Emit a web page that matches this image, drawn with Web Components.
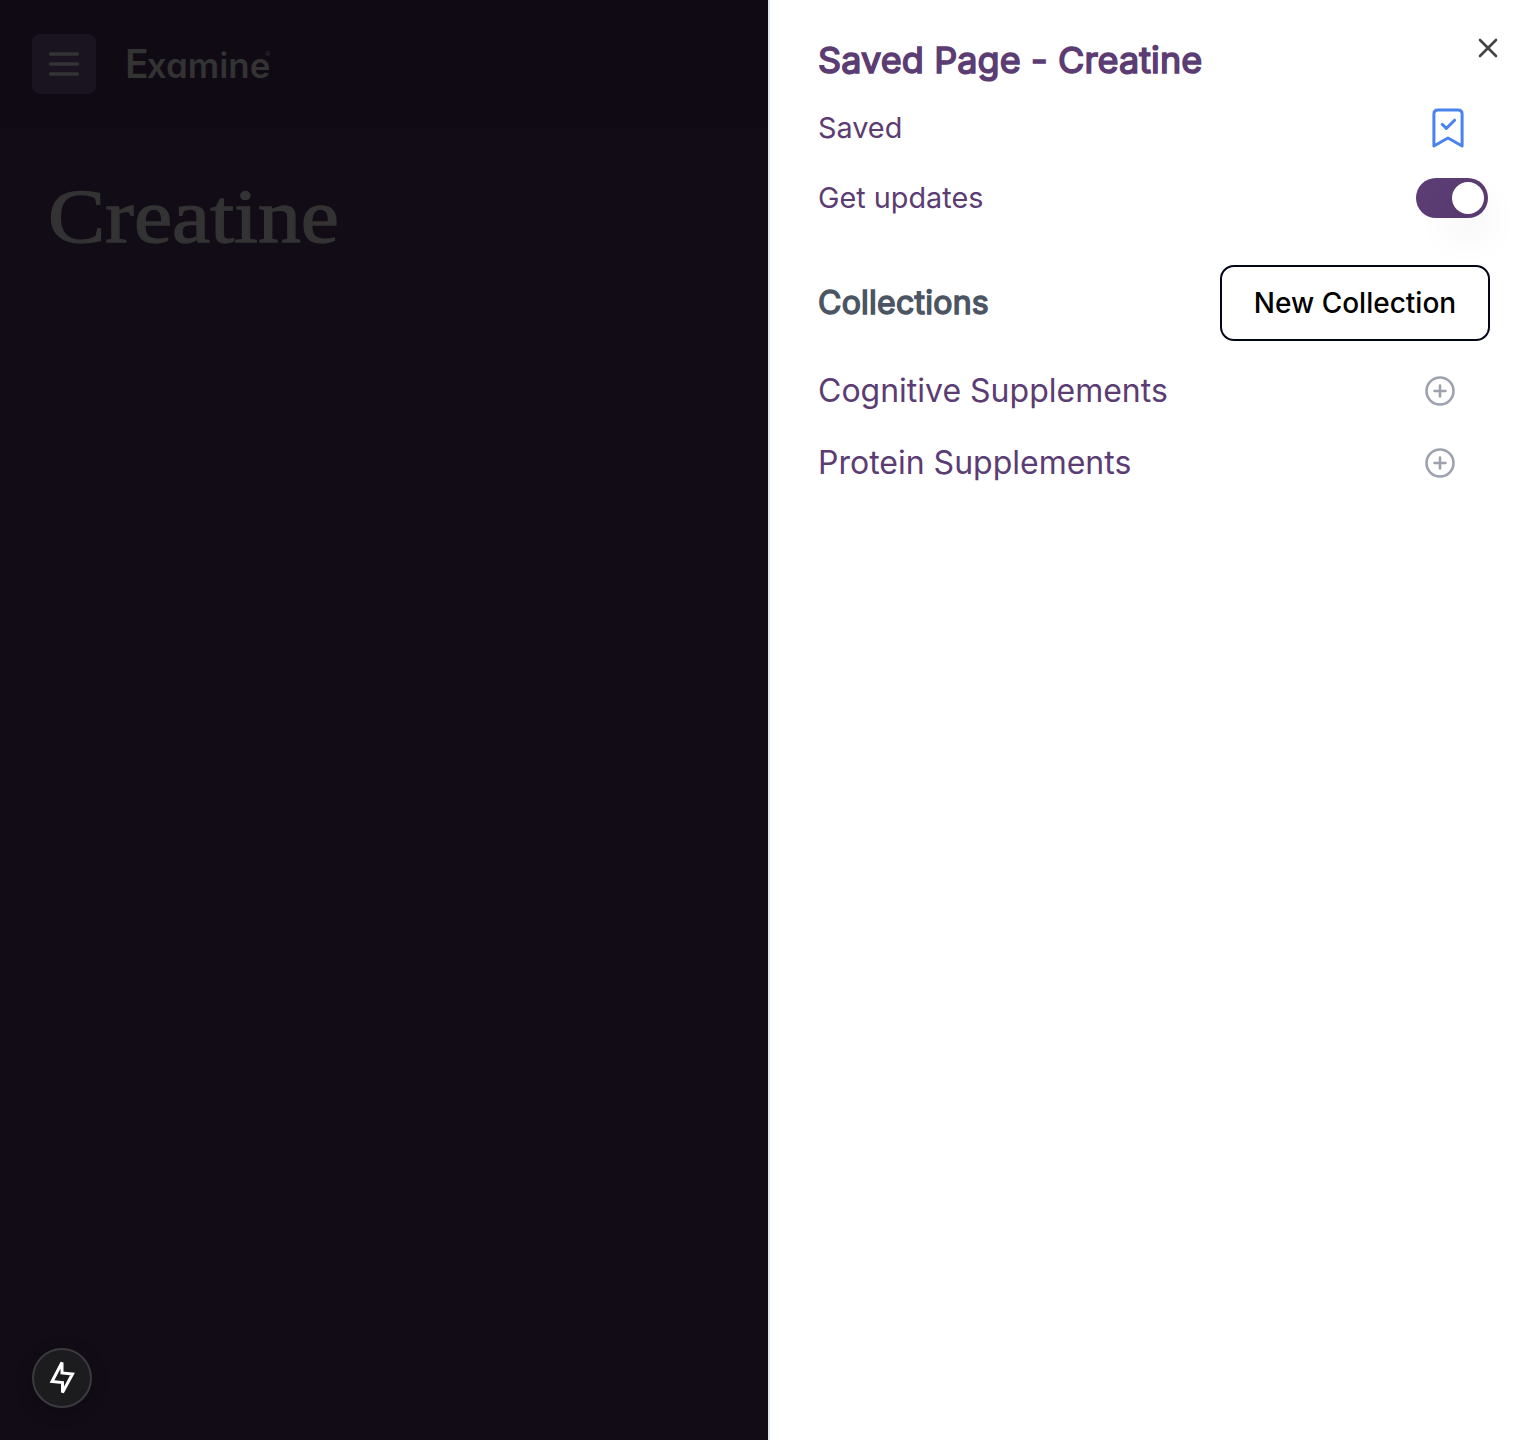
<!DOCTYPE html>
<html lang="en">
<head>
<meta charset="utf-8">
<title>Saved Page - Creatine</title>
<style>
html,body{margin:0;height:100%;overflow:hidden;background:#fff}
body{font-family:Inter,"Liberation Sans",sans-serif}
</style>
</head>
<body>
<examine-app></examine-app>
<script>
const define=(name,html)=>customElements.define(name,class extends HTMLElement{
  constructor(){super();this.attachShadow({mode:'open'}).innerHTML=html;}
});

define('menu-button',`<style>
:host{display:flex;width:64px;height:60px;border-radius:8px;background:#19141f;align-items:center;justify-content:center}
svg{display:block}</style>
<svg width="64" height="60" fill="none" stroke="#333" stroke-width="3.6" stroke-linecap="round"><path d="M18.6 20H45.4M18.6 30H45.4M18.6 40H45.4"/></svg>`);

define('brand-logo',`<style>:host{display:block}svg{display:block;overflow:visible}
text{font-family:Inter,sans-serif;font-feature-settings:"cv11" 1}</style>
<svg width="150" height="50" fill="#333">
<text x="1" y="38" font-size="39" font-weight="600">E<tspan x="22.8" font-size="34.5" textLength="123.5" lengthAdjust="spacingAndGlyphs">xamine</tspan><tspan x="141" y="17" font-size="8" font-weight="400">®</tspan></text></svg>`);

define('page-title',`<style>:host{display:block}svg{display:block;overflow:visible}</style>
<svg width="300" height="90" fill="#333" stroke="#333" stroke-width="1.3" font-family="'Liberation Serif',serif">
<text x="0" y="74" font-size="77" textLength="291" lengthAdjust="spacingAndGlyphs">Creatine</text></svg>`);

define('quick-action',`<style>
:host{display:block;box-sizing:border-box;width:60px;height:60px;border-radius:50%;border:2px solid #3c3a3e;background:#1c1c1e;box-shadow:0 4px 16px #0004}
svg{display:block}</style>
<svg width="56" height="56" fill="none" stroke="#fff" stroke-width="3" stroke-miterlimit="3"><path d="M28 12.5V23L38.5 24L28.5 42.5V32.5L18 31.5Z"/></svg>`);

define('page-backdrop',`<style>
:host{display:flex;flex-direction:column;width:768px;height:1440px;background:#120c17}
header{display:flex;gap:28px;height:128px;box-sizing:border-box;padding:34px 32px;background:#0f0a14}
brand-logo{margin-top:6px}
main{flex:1;padding:40px 48px}
footer{padding:0 32px 32px}</style>
<header><menu-button></menu-button><brand-logo></brand-logo></header>
<main><page-title></page-title></main>
<footer><quick-action></quick-action></footer>`);

define('close-icon',`<style>:host{display:block}svg{display:block}</style>
<svg width="24" height="24" fill="none" stroke="#444" stroke-width="2.6" stroke-linecap="round"><path d="M4 4L20 20M20 4L4 20"/></svg>`);

define('bookmark-icon',`<style>:host{display:block}svg{display:block}</style>
<svg width="40" height="44" fill="none" stroke="#4a83f0" stroke-width="3" stroke-linecap="round" stroke-linejoin="round"><path d="M5.9 40V8Q5.9 4 9.9 4H30.1Q34.1 4 34.1 8V40L20 32Z"/><path d="M14.2 18.3L18.3 22.4L26.6 14.2"/></svg>`);

define('toggle-switch',`<style>
:host{display:flex;justify-content:flex-end;box-sizing:border-box;width:72px;height:40px;padding:4px;border-radius:20px;background:#5b3c73}
i{width:32px;height:32px;border-radius:50%;background:#fff;box-shadow:0 20px 40px rgba(0,0,0,.09)}</style><i></i>`);

define('plus-icon',`<style>:host{display:block}svg{display:block}</style>
<svg width="32" height="32" fill="none" stroke="#9ca3af" stroke-width="2.6" stroke-linecap="round"><circle cx="16" cy="16" r="13.5"/><path d="M10.5 16H21.5M16 10.5V21.5"/></svg>`);

define('new-button',`<style>
:host{display:flex;box-sizing:border-box;width:270px;height:76px;border:2px solid #020617;border-radius:14px;align-items:center;justify-content:center;color:#000;font-size:28px;font-weight:500}</style><slot></slot>`);

define('panel-row',`<style>
:host{display:flex;align-items:center;justify-content:space-between;box-sizing:border-box;height:72px;color:#5b3c73;font-size:32px;line-height:40px;padding-right:32px;white-space:nowrap}
:host([kind=setting]){height:70px;font-size:28.8px}
:host([flush]){padding-right:0}
:host([bookmark]){padding-right:20px}</style><slot></slot>`);

define('section-title',`<style>
:host{display:block;color:#4b5563;font-size:32px;line-height:40px;font-weight:400;-webkit-text-stroke:1.5px #4b5563;letter-spacing:.25px}</style><slot></slot>`);

define('save-panel',`<style>
:host{display:flex;flex-direction:column;width:768px;height:1440px;box-sizing:border-box;padding:36px 48px 0 48px;border-left:2px solid #e2e8f0;background:#fff}
.head{display:flex;justify-content:space-between;height:57px}
h1{margin:0;font-size:36px;line-height:48px;font-weight:400;letter-spacing:.11px;color:#5b3c73;-webkit-text-stroke:1.6px #5b3c73;white-space:nowrap}
close-icon{margin-right:-12px}
.section{display:flex;align-items:center;justify-content:space-between;height:76px;margin:32px -2px 14px 0}</style>
<div class="head"><h1>Saved Page - Creatine</h1><close-icon></close-icon></div>
<panel-row kind="setting" bookmark><span>Saved</span><bookmark-icon></bookmark-icon></panel-row>
<panel-row kind="setting" flush><span>Get updates</span><toggle-switch></toggle-switch></panel-row>
<div class="section"><section-title>Collections</section-title><new-button>New Collection</new-button></div>
<panel-row><span>Cognitive Supplements</span><plus-icon></plus-icon></panel-row>
<panel-row><span>Protein Supplements</span><plus-icon></plus-icon></panel-row>`);

define('examine-app',`<style>:host{display:flex;width:1536px;height:1440px}</style>
<page-backdrop></page-backdrop><save-panel></save-panel>`);
</script>
</body>
</html>
